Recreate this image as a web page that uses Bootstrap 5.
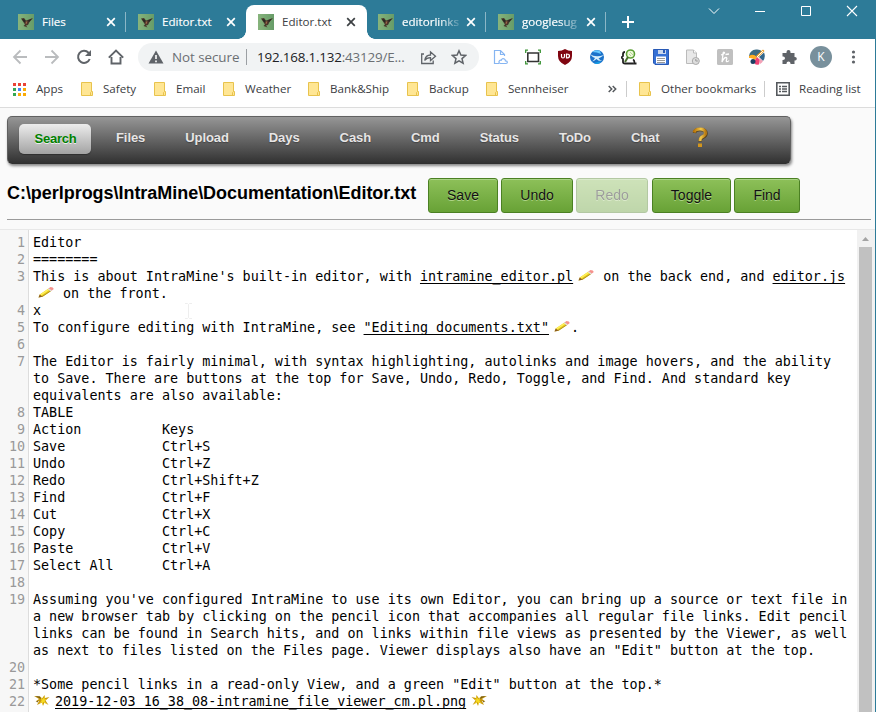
<!DOCTYPE html>
<html lang="en">
<head>
<meta charset="utf-8">
<title>Editor.txt</title>
<link href="https://cdn.jsdelivr.net/npm/bootstrap@5.3.0/dist/css/bootstrap.min.css" rel="stylesheet">
<style>
body{width:876px;height:712px;overflow:hidden;background:#fafafa;border-right:1px solid #2d7b98;font:12px/16px "Open Sans","Noto Sans",sans-serif;color:#3c4043}
svg{display:block;flex:none}
.tabstrip{height:39px;background:#2d7b98;color:#fff}
.tab{width:120px;height:34px;margin-top:5px;padding:0 9px 0 12px}
.tab .label{margin-left:8px;width:57px;white-space:nowrap;overflow:hidden;font-size:11.6px;-webkit-text-stroke:.15px}
.tab .fade-end{-webkit-mask-image:linear-gradient(90deg,#000 65%,#0003 100%)}
.tab .cross{margin-left:7px}
.tab.sep{border-right:1px solid #8bb6c6}
.tab.sep{height:20px;margin-top:12px;padding-right:8px}
.tab.current{background:#fff;color:#3c4043;border-radius:8px 8px 0 0;position:relative;width:121px;margin-right:-1px;padding-right:10px}
.tab.current .label{-webkit-text-stroke:0}
.tab.current:before,.tab.current:after{content:"";position:absolute;bottom:0;width:8px;height:8px}
.tab.current:before{left:-8px;background:radial-gradient(circle at 0 0,transparent 7.5px,#fff 8px)}
.tab.current:after{right:-8px;background:radial-gradient(circle at 100% 0,transparent 7.5px,#fff 8px)}
.plus{margin:15px 0 0 16px}
.winbtns{margin:4px 16px 0 auto;gap:32px}
.toolbar{height:36px;background:#fff;padding-left:12px}
.nav-icons{gap:16px;width:126px}
.omnibox{width:341px;height:28px;border-radius:14px;background:#f1f3f4;padding-left:10px;font-size:13.4px;color:#6b6f73}
.omnibox .divider{width:1px;height:16px;background:#9b9fa3;margin:0 10px 0 5px}
.omnibox .insecure{width:69px;margin-left:8px;white-space:nowrap;letter-spacing:-.05px}
.omnibox .address{width:163px;white-space:nowrap;letter-spacing:-.18px}
.omnibox b{font-weight:400;color:#202124}
.extensions{margin-left:14px;gap:16px}
.avatar{width:22px;height:22px;border-radius:50%;background:#78909c;color:#fff;font-size:12px;line-height:22px;text-align:center}
.bookmarks{height:33px;background:#fff;border-bottom:1px solid #dcdcdc;padding:0 0 4px 13px;font-size:11.6px}
.bm{white-space:nowrap;gap:10px}
.page{padding:8px 4px 0 7px}
.menubar{width:784px;height:48px;border:1px solid #606060;border-bottom-color:#303030;border-radius:5px;background:linear-gradient(#969696,#323232);box-shadow:1px 2px 3px #0007;padding:7px 0 0 11px;font:bold 13px/15px "Liberation Sans",Arial,sans-serif;color:#e7e5e5;text-shadow:0 1px 1px #444}
.menubar span{height:28px;padding:6px 20px 0;letter-spacing:-.08px}
.menubar .chosen{width:72px;height:30px;padding:7px 0 0 1px;margin-right:5px;text-align:center;color:#008000;background:linear-gradient(#ececec,#a3a3a3);border-radius:5px;box-shadow:0 1px 1px #2229;text-shadow:0 1px 0 #eee;letter-spacing:-.2px}
.titlebar{height:56px;border-bottom:1px solid #9a9a9a;padding-top:14px}
.titlebar h1{width:421px;margin:0;padding-top:4px;font:bold 18px/22px "Liberation Sans",Arial,sans-serif;letter-spacing:-.04px;color:#000;white-space:nowrap}
.act{height:35px;margin-right:3px;padding:0;border:1px solid #4b8023;border-radius:3px;background:linear-gradient(#8dc059,#68a236);box-shadow:inset 0 1px 0 #aad486;color:#111;font:14px/33px "Liberation Sans",Arial,sans-serif;text-align:center;text-shadow:0 1px 0 #aed487}
.act.off{opacity:.4}
.editor{height:483px;margin-top:9px;border-top:1px solid #e8e8e8;background:linear-gradient(90deg,#f7f7f7 28px,#ddd 28px,#ddd 29px,#fff 29px);font:13.4px/17px "DejaVu Sans Mono","Liberation Mono",monospace;color:#000}
.code{width:857px;padding-top:4px;overflow:hidden}
.ln{width:25px;flex:none;text-align:right;color:#999;margin-right:8px}
.src{white-space:pre}
.src svg{display:inline-block;width:22px;height:15px;vertical-align:-2px}
.src u{text-underline-offset:2px;text-decoration-thickness:1px;text-decoration-skip-ink:none}
.scroll{width:18px;background:#f1f1f1;padding:6px 3px 0 2px}
.scroll .thumb{height:470px;background:#c1c1c1;margin-top:5px}
.ibeam{position:absolute;left:185px;top:303px}
</style>
<script src="https://cdn.jsdelivr.net/npm/bootstrap@5.3.0/dist/js/bootstrap.bundle.min.js"></script>
</head>
<body>
<svg width="0" height="0" style="position:absolute">
<defs>
<linearGradient id="fg"><stop stop-color="#87b47c"/><stop offset="1" stop-color="#679c68"/></linearGradient>
<linearGradient id="gold"><stop stop-color="#b97408"/><stop offset=".6" stop-color="#f2c84b"/><stop offset="1" stop-color="#b87b15"/></linearGradient>
<symbol id="bird" viewBox="0 0 16 16"><path fill="url(#fg)" d="M0 0h16v16H0z"/><path fill="#49372b" d="M3 4.500 6 4l2 2.500 3-1 4-1.500-3.500 4L10 11l-2 .500 1.500 2L7 12.500 5.500 12 7 10.500 5 7.500z"/><path fill="#a36749" d="M7 7.500h2.500l-1 2.500L7 9z"/><path fill="#252821" d="m4 5 3 1 1 3-2-1zM10 6.500l4-2L11 8z"/></symbol>
<symbol id="x" viewBox="0 0 10 10"><path d="m1.200 1.200 7.600 7.600m0-7.600L1.200 8.800" stroke="currentColor" stroke-width="1.700"/></symbol>
<symbol id="folder" viewBox="0 0 12 14"><path d="M.5.5h10v9h1v4H.5z" fill="#ffe694" stroke="#e8c34d"/><path d="M9.500 13.500v-3l1-1" fill="none" stroke="#e8c34d"/></symbol>
<symbol id="pencil" viewBox="0 0 22 15"><path d="m5.500 12.500 1.200-3L15.500 3.500l3 2.200L9.500 11.700z" fill="#e8ca22"/><path d="m7.300 9.200 8.500-5.600 1.200 1-8.800 5.800z" fill="#fff15a"/><path d="m8.500 11.500 9.200-6.100.8.400-9 5.900z" fill="#a98a19"/><path d="m15.500 3.500 2-1.500q2.800 0 3.300 2l-2.300 1.700z" fill="#f6918c"/><path d="m14.700 4 1-.7 3 2.300-1 .8z" fill="#ddd"/><path d="m5.500 12.500 1.200-3 2.800 2.200z" fill="#8b5d25"/></symbol>
<symbol id="burst" viewBox="0 0 22 15"><path d="m1 3 6 .5 2 2L11.500 2l.5 3 4.500-1-4 3.500 3 4.500-4-2.500-1.500 3.500-1-3.500-5 2.500 2-4-3.500.5 3.500-2.500z" fill="#c99a10"/><path d="m8 4 1.500 2.500L12 3l-.5 3.500L14 6l-2.500 2 2.500 3.500-3.500-2.500-1.500 3V9L6 10.500 8.500 8z" fill="#f7da20"/><path d="m2 3 5 .5 1 2.500zM3 8.500l2.500-1-1 2z" fill="#775c16"/></symbol>
</defs></svg>

<header>
<div class="tabstrip d-flex align-items-start">
 <div style="width:6px"></div>
 <div class="tab sep d-flex align-items-center"><svg width="16" height="16"><use href="#bird"/></svg><span class="label">Files</span><svg class="cross" width="10" height="10"><use href="#x"/></svg></div>
 <div class="tab d-flex align-items-center"><svg width="16" height="16"><use href="#bird"/></svg><span class="label">Editor.txt</span><svg class="cross" width="10" height="10"><use href="#x"/></svg></div>
 <div class="tab current d-flex align-items-center"><svg width="16" height="16"><use href="#bird"/></svg><span class="label">Editor.txt</span><svg class="cross" width="10" height="10"><use href="#x"/></svg></div>
 <div class="tab sep d-flex align-items-center"><svg width="16" height="16"><use href="#bird"/></svg><span class="label fade-end">editorlinks</span><svg class="cross" width="10" height="10"><use href="#x"/></svg></div>
 <div class="tab sep d-flex align-items-center"><svg width="16" height="16"><use href="#bird"/></svg><span class="label fade-end">googlesug</span><svg class="cross" width="10" height="10"><use href="#x"/></svg></div>
 <svg class="plus" width="12" height="14" viewBox="0 0 12 14"><path d="M6 1v12M0 7h12" stroke="#fff" stroke-width="2"/></svg>
 <div class="winbtns d-flex">
  <svg width="14" height="14" viewBox="0 0 14 14" fill="none" stroke="#fff"><path d="m2 4.500 5 5 5-5"/></svg>
  <svg width="14" height="14" viewBox="0 0 14 14"><path d="M2 7.500h10" stroke="#fff"/></svg>
  <svg width="14" height="14" viewBox="0 0 14 14"><path d="M2.500 2.500h9v9h-9z" fill="none" stroke="#fff"/></svg>
  <svg width="14" height="14" viewBox="0 0 14 14"><path d="m2 2 10 10m0-10L2 12" stroke="#fff" stroke-width="1.100"/></svg>
 </div>
</div>

<div class="toolbar d-flex align-items-center">
 <div class="nav-icons d-flex">
  <svg width="16" height="16" viewBox="0 0 16 16" fill="none" stroke="#babcbe" stroke-width="1.800"><path d="M15 8H2m6.500-6.500L2 8l6.500 6.500"/></svg>
  <svg width="16" height="16" viewBox="0 0 16 16" fill="none" stroke="#babcbe" stroke-width="1.800"><path d="M1 8h13M7.500 1.500 14 8l-6.500 6.500"/></svg>
  <svg width="16" height="16" viewBox="0 0 16 16"><path d="M13.700 10A6 6 0 1 1 12.500 3.800L14 5.300" fill="none" stroke="#5f6368" stroke-width="2"/><path d="M15 1v6H9z" fill="#5f6368"/></svg>
  <svg width="16" height="16" viewBox="0 0 16 16"><path d="M3.500 8v6.500h9V8M.8 8.700 8 1.500l7.200 7.200" fill="none" stroke="#5f6368" stroke-width="1.900"/></svg>
 </div>
 <div class="omnibox d-flex align-items-center">
  <svg width="16" height="16" viewBox="0 0 16 16"><path d="m8 1.500 7.500 13H.5z" fill="#5f6368"/><path d="M8 6v4m0 1.500v1.800" stroke="#fff" stroke-width="1.600"/></svg>
  <span class="insecure">Not secure</span><span class="divider"></span>
  <span class="address"><b>192.168.1.132</b>:43129/E...</span>
  <svg width="18" height="16" viewBox="0 0 18 16" fill="none" stroke="#5f6368" stroke-width="1.300"><path d="M4 5H1.700v9.500h11.500V11.500"/><path d="M4.700 11.500q.8-5.500 5.800-5.500V3l5 4.200-5 4.300V8.700q-4 0-5.800 2.800z"/></svg>
  <svg style="margin-left:13px" width="16" height="16" viewBox="0 0 16 16"><path d="m8 1.800 1.900 4.300 4.700.4-3.600 3.100 1.100 4.600L8 11.800l-4.100 2.400L5 9.600 1.400 6.500l4.700-.4z" fill="none" stroke="#5f6368" stroke-width="1.500"/></svg>
 </div>
 <div class="extensions d-flex align-items-center">
  <svg width="16" height="16" viewBox="0 0 16 16" fill="none" stroke="#86b5f2" stroke-width="1.200"><path d="M6 14.500H1.500v-13h6l4 4V7M7.500 1.500v4h4"/><path d="M7.500 14.500q-1.800-.1-1.500-2 .6-1.600 2.200-1.200.9-2.500 3.200-1.300 1 .6 1 1.800 2 0 2 1.400 0 1.200-1.400 1.300z"/></svg>
  <svg width="16" height="16" viewBox="0 0 16 16" fill="none"><path d="M2.800 4h10.700v8.500H2.800z" stroke="#333" stroke-width="1.600"/><path d="M.7 4V1.200H3m10 0h2.300V4M.7 12v2.800H3m10 0h2.300V12" stroke="#3d9537" stroke-width="1.300"/></svg>
  <svg width="16" height="16" viewBox="0 0 16 16"><path d="M8 0q3 2 7 2v5q0 6-7 9-7-3-7-9V2q4 0 7-2z" fill="#800510"/><path d="M4.500 5v2.500q0 1.500 1.500 1.500t1.500-1.500V5m2 0v4q3 0 3-2t-3-2z" fill="none" stroke="#fff" stroke-width="1.200"/></svg>
  <svg width="16" height="16" viewBox="0 0 16 16"><circle cx="8" cy="8" r="7" fill="#1b72ca"/><path d="M3 3q4-3 8-1l1 3q-4-2-9-2z" fill="#65c9ff"/><path d="M1 5q5 4 14 1-2 1.500-5.500 3.500Q12 12 13.500 12 9 12.500 7.500 10 5 12 3 12.500 5 11 6 9 3 8 1 5z" fill="#d6effb"/><path d="M5 14q4-1 7-2-1 3-5 3z" fill="#139fe6"/></svg>
  <svg width="16" height="16" viewBox="0 0 16 16" fill="none"><path d="M4 3Q2 3 2 5v2L.5 8.500 2 10v3q0 1.500 2 1.500m8-4q2 1 1 4h2.500M4 14.500h8" stroke="#222" stroke-width="1.800"/><circle cx="9.500" cy="5" r="4" fill="#edf8d9" stroke="#5c9f34" stroke-width="1.600"/><path d="m7 8-3 5" stroke="#4b702f" stroke-width="2"/><path d="m9 3 3 3M8 5l2 2" stroke="#b5d29c"/></svg>
  <svg width="16" height="16" viewBox="0 0 16 16"><path d="M.5.500h15v15H2L.5 14z" fill="#3670d4" stroke="#2859b5"/><path d="M5 1h8v4H5z" fill="#c9d7ed"/><path d="M10 1h2v3h-2z" fill="#2859b5"/><path d="M3 7.500h10v7H3z" fill="#fff"/><path d="M4 9.500h8M4 11.500h8M4 13.500h8" stroke="#999"/></svg>
  <svg width="16" height="16" viewBox="0 0 16 16"><path d="M1.500 1h7l3 3v10.500h-10z" fill="#e8e8e8" stroke="#bbb"/><path d="M8.500 1v3h3" fill="#fff" stroke="#bbb"/><circle cx="10.800" cy="12" r="3.500" fill="#ddd" stroke="#aaa"/><path d="M10.800 10v2h2" fill="none" stroke="#999"/></svg>
  <svg width="16" height="16" viewBox="0 0 16 16"><rect width="16" height="16" rx="1.500" fill="#c0c0c0"/><path d="M4 6q3.500-1 3.500-2.500Q6 2.500 6 5l-1 8q2-4.500 4-4.500 1.300 0 .5 2.200-.6 2 .7 2 1 0 1.800-1.200M8.500 5.500 12 5" fill="none" stroke="#fff" stroke-width="1.300"/></svg>
  <svg width="16" height="16" viewBox="0 0 16 16"><path d="M0 7Q1 1 7 .5q4-.5 6 2L8 8z" fill="#3c6b83"/><path d="M0 7q4-3 8 1l-2 3Q3 8.500 0 9z" fill="#ffad22"/><path d="m8 8 3 3-1 4.500q-3 .5-4-.5V11z" fill="#f04375"/><circle cx="4" cy="12.500" r="2.500" fill="#1c3f63"/><path d="m7 7 7-6.500 1.500 1.500L9 8.500z" fill="#f2a025"/><path d="m8 8 6-6" stroke="#fff"/><path d="m10 8 5-4.500Q17 8 14 12z" fill="#34678d"/><path d="m10 9 4 3q-1 2-3 3z" fill="#f3a2b7"/></svg>
  <svg width="16" height="16" viewBox="0 0 16 16"><path d="M1.500 4h4V3Q5.500 1 7.500 1t2 2v1h4v4h.5q1.800 0 1.800 1.800T14 11.500h-.5V15h-4v-.5q0-2-2-2t-2 2v.5h-4v-4H2q2 0 2-1.800T2 7.500h-.5z" fill="#5f6368"/></svg>
  <div class="avatar" style="margin:0 -3px">K</div>
  <svg width="16" height="16" viewBox="0 0 16 16" fill="#5f6368"><circle cx="8.500" cy="3" r="1.600"/><circle cx="8.500" cy="8" r="1.600"/><circle cx="8.500" cy="13" r="1.600"/></svg>
 </div>
</div>

<div class="bookmarks d-flex align-items-center">
 <div class="bm d-flex align-items-center" style="width:68px"><svg width="13" height="13" viewBox="0 0 13 13"><path fill="#ea4335" d="M0 0h3v3H0zM5 0h3v3H5zM10 0h3v3h-3z"/><path fill="#34a853" d="M0 5h3v3H0zM0 10h3v3H0z"/><path fill="#4285f4" d="M5 5h3v3H5z"/><path fill="#fbab05" d="M10 5h3v3h-3zM5 10h3v3H5zM10 10h3v3h-3z"/></svg>Apps</div>
 <div class="bm d-flex align-items-center" style="width:73px"><svg width="12" height="14"><use href="#folder"/></svg>Safety</div>
 <div class="bm d-flex align-items-center" style="width:69px"><svg width="12" height="14"><use href="#folder"/></svg>Email</div>
 <div class="bm d-flex align-items-center" style="width:85px"><svg width="12" height="14"><use href="#folder"/></svg>Weather</div>
 <div class="bm d-flex align-items-center" style="width:99px"><svg width="12" height="14"><use href="#folder"/></svg>Bank&amp;Ship</div>
 <div class="bm d-flex align-items-center" style="width:79px"><svg width="12" height="14"><use href="#folder"/></svg>Backup</div>
 <div class="bm d-flex align-items-center" style="width:122px"><svg width="12" height="14"><use href="#folder"/></svg>Sennheiser</div>
 <svg width="9" height="8" viewBox="0 0 9 8"><path d="m.7 1 3 3-3 3m4-6 3 3-3 3" fill="none" stroke="#55595d" stroke-width="1.500"/></svg>
 <span style="width:1px;height:16px;background:#ccc;margin:0 12px 0 9px"></span>
 <div class="bm d-flex align-items-center" style="width:125px"><svg width="12" height="14"><use href="#folder"/></svg>Other bookmarks</div>
 <span style="width:1px;height:16px;background:#ccc;margin:0 11px 0 0"></span>
 <div class="bm d-flex align-items-center" style="gap:9px;letter-spacing:-.03px"><svg width="14" height="14" viewBox="0 0 14 14" fill="none" stroke="#55595d"><path d="M.8.800h12.400v12.400H.8z" stroke-width="1.600"/><path d="M3 4.500h2m1 0h5M3 7h2m1 0h5M3 9.500h2m1 0h5" stroke-width="1.300"/></svg>Reading list</div>
</div>
</header>

<div class="page">
 <nav class="menubar d-flex">
  <span class="chosen">Search</span><span>Files</span><span>Upload</span><span>Days</span><span>Cash</span><span>Cmd</span><span>Status</span><span>ToDo</span><span>Chat</span>
  <svg style="margin:2px 0 0 12px" width="17" height="24" viewBox="0 0 17 24"><path d="M2.500 7Q3 3.500 8 3.500q6 0 6 4 0 2.500-3.500 4-2.500 1-2.500 4" fill="none" stroke="#54401c" stroke-width="3.500"/><path d="M2 6.500Q3 3 8 3q5.500 0 5.500 4 0 2.500-3.500 4-2 1-2 4" fill="none" stroke="url(#gold)" stroke-width="3"/><path d="M6 17.500h4V21H6z" fill="#d3961d"/></svg>
 </nav>
 <div class="titlebar d-flex">
  <h1>C:\perlprogs\IntraMine\Documentation\Editor.txt</h1>
  <button class="act" style="width:70px">Save</button><button class="act" style="width:72px">Undo</button><button class="act off" style="width:72px;margin-right:4px">Redo</button><button class="act" style="width:79px">Toggle</button><button class="act" style="width:66px">Find</button>
 </div>
</div>

<main class="editor d-flex">
<div class="code">
<div class="d-flex"><span class="ln">1</span><span class="src">Editor</span></div>
<div class="d-flex"><span class="ln">2</span><span class="src">========</span></div>
<div class="d-flex"><span class="ln">3</span><span class="src">This is about IntraMine's built-in editor, with <u>intramine_editor.pl</u><svg><use href="#pencil"/></svg> on the back end, and <u>editor.js</u>
<svg><use href="#pencil"/></svg> on the front.</span></div>
<div class="d-flex"><span class="ln">4</span><span class="src">x</span></div>
<div class="d-flex"><span class="ln">5</span><span class="src">To configure editing with IntraMine, see <u>"Editing documents.txt"</u><svg><use href="#pencil"/></svg>.</span></div>
<div class="d-flex"><span class="ln">6</span></div>
<div class="d-flex"><span class="ln">7</span><span class="src">The Editor is fairly minimal, with syntax highlighting, autolinks and image hovers, and the ability
to Save. There are buttons at the top for Save, Undo, Redo, Toggle, and Find. And standard key
equivalents are also available:</span></div>
<div class="d-flex"><span class="ln">8</span><span class="src">TABLE</span></div>
<div class="d-flex"><span class="ln">9</span><span class="src">Action          Keys</span></div>
<div class="d-flex"><span class="ln">10</span><span class="src">Save            Ctrl+S</span></div>
<div class="d-flex"><span class="ln">11</span><span class="src">Undo            Ctrl+Z</span></div>
<div class="d-flex"><span class="ln">12</span><span class="src">Redo            Ctrl+Shift+Z</span></div>
<div class="d-flex"><span class="ln">13</span><span class="src">Find            Ctrl+F</span></div>
<div class="d-flex"><span class="ln">14</span><span class="src">Cut             Ctrl+X</span></div>
<div class="d-flex"><span class="ln">15</span><span class="src">Copy            Ctrl+C</span></div>
<div class="d-flex"><span class="ln">16</span><span class="src">Paste           Ctrl+V</span></div>
<div class="d-flex"><span class="ln">17</span><span class="src">Select All      Ctrl+A</span></div>
<div class="d-flex"><span class="ln">18</span></div>
<div class="d-flex"><span class="ln">19</span><span class="src">Assuming you've configured IntraMine to use its own Editor, you can bring up a source or text file in
a new browser tab by clicking on the pencil icon that accompanies all regular file links. Edit pencil
links can be found in Search hits, and on links within file views as presented by the Viewer, as well
as next to files listed on the Files page. Viewer displays also have an "Edit" button at the top.</span></div>
<div class="d-flex"><span class="ln">20</span></div>
<div class="d-flex"><span class="ln">21</span><span class="src">*Some pencil links in a read-only View, and a green "Edit" button at the top.*</span></div>
<div class="d-flex"><span class="ln">22</span><span class="src"><svg><use href="#burst"/></svg><u>2019-12-03 16_38_08-intramine_file_viewer_cm.pl.png</u><svg viewBox="0 0 22 15"><use href="#burst" width="22" height="15" transform="translate(22 0) scale(-1 1)"/></svg></span></div>
</div>
<div class="scroll"><svg width="13" height="6" viewBox="0 0 13 6"><path d="m3 5 3.500-4L10 5z" fill="#a3a3a3"/></svg><div class="thumb"></div></div>
</main>
<svg class="ibeam" width="7" height="16" viewBox="0 0 7 16"><path d="M0 .500h2.500l1 1 1-1H7m-3.500 1v13M0 15.500h2.500l1-1 1 1H7" fill="none" stroke="#eee"/></svg>
</body>
</html>
